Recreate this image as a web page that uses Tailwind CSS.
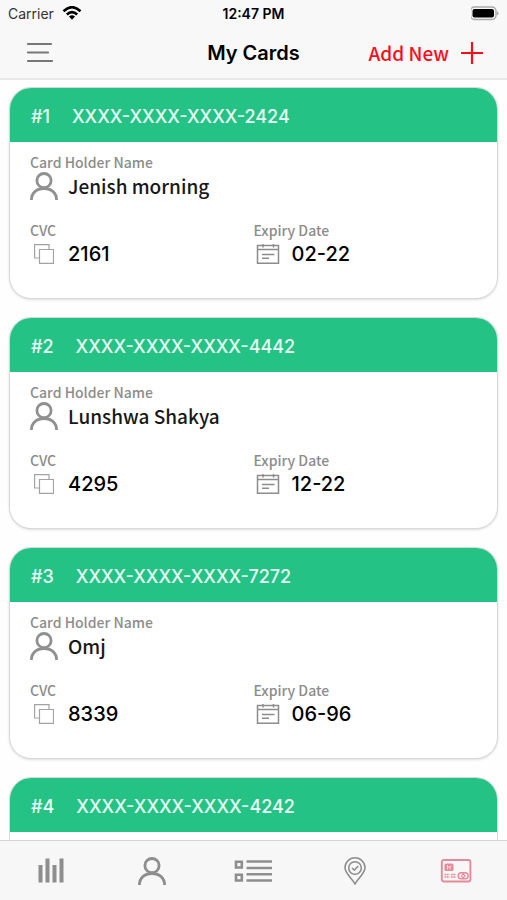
<!DOCTYPE html>
<html lang="en">
<head>
<meta charset="utf-8">
<meta name="viewport" content="width=device-width, initial-scale=1">
<title>My Cards</title>
<script src="https://cdn.jsdelivr.net/npm/@tailwindcss/browser@4"></script>
</head>
<body class="flex h-screen flex-col overflow-hidden bg-[#fefefe] font-['Inter',sans-serif] text-black">
<svg class="hidden" aria-hidden="true">
  <symbol id="person" viewBox="0 0 28 28"><g fill="none" stroke="currentColor" stroke-width="2.8"><circle cx="14" cy="8.6" r="7.1"/><path d="M1.400 28C1.400 21 6.500 16.500 14 16.500s12.600 4.500 12.600 11.500"/></g></symbol>
  <symbol id="copy" viewBox="0 0 20 20"><g fill="none" stroke="currentColor" stroke-width="1.200"><path d="M5.500 14H.6V.6H15v4.900"/><path d="M5.500 5.500h14v13.900h-14z"/></g></symbol>
  <symbol id="calendar" viewBox="0 0 24 20"><g fill="none" stroke="currentColor" stroke-width="1.500"><path d="M1.500 1.500h21v17.700h-21zM1.500 5.500h21M7 0v3.500M17.500 0v3.500"/><path d="M6 10.500h12.500M6 14.200h7"/></g></symbol>
</svg>

<header class="shrink-0 border-b-2 border-[#e9e9e9] bg-[#f8f8f8]">
  <div class="grid h-7 grid-cols-3 items-center px-2 text-sm leading-5">
    <div class="flex items-center gap-2 text-[#333]">
      <span>Carrier</span>
      <svg class="h-4 w-5 text-black" viewBox="0 0 20 16" fill="none" stroke="currentColor" stroke-width="2.600"><path d="M1.500 5.200Q10-2.800 18.500 5.200M4.800 8.500Q10 3.600 15.200 8.500"/><path d="M7 10.600Q10 8 13 10.600L10 13.800z" fill="currentColor" stroke="none"/></svg>
    </div>
    <div class="text-center font-semibold whitespace-nowrap">12:47 PM</div>
    <svg class="h-4 w-7 justify-self-end" viewBox="0 0 28 16"><rect x="-.5" y="1" width="25.500" height="12.500" rx="4" fill="#f8f8f8" stroke="#aaa" stroke-width="1.500"/><rect x="1.500" y="3" width="21.500" height="8.500" rx="2" fill="#000"/><path d="M26 5q3 2.300 0 4.600z" fill="#aaa"/></svg>
  </div>
  <div class="grid h-[50px] grid-cols-[1fr_auto_1fr] items-center px-6">
    <button type="button" aria-label="Menu" class="w-8 text-[#777]">
      <svg class="h-6 w-8" viewBox="0 0 32 24" stroke="currentColor" stroke-width="2.200" stroke-linecap="round"><path d="M4 3h23M4 11.500h20M4 20h24"/></svg>
    </button>
    <h1 class="text-xl font-semibold">My Cards</h1>
    <button type="button" class="flex items-center gap-3 justify-self-end whitespace-nowrap font-['Noto_Sans_CJK_SC',sans-serif] text-[19px] leading-6 font-medium text-[#fb0d1b]">Add New
      <svg class="size-[22px]" viewBox="0 0 22 22" stroke="currentColor" stroke-width="2.200"><path d="M11 0v22M0 11h22"/></svg>
    </button>
  </div>
</header>

<main class="flex min-h-0 flex-1 flex-col gap-[18px] overflow-y-auto px-[9px] pt-[7px] pb-4 [scrollbar-width:none]">
  <article class="shrink-0 overflow-hidden rounded-[22px] border border-[#d9d9d9] bg-white shadow-sm">
    <h2 class="flex h-[54px] items-center gap-[22px] bg-[#25c285] px-[21px] pt-1 text-lg font-medium text-[#e9fff5]"><span>#1</span><span>XXXX-XXXX-XXXX-2424</span></h2>
    <dl class="grid grid-cols-2 gap-y-5 px-5 pt-[10px] pb-[30px]">
      <div class="col-span-2">
        <dt class="font-['Noto_Sans_CJK_SC',sans-serif] text-sm leading-5 font-medium text-[#8c8c8c]">Card Holder Name</dt>
        <dd class="flex h-7 items-center gap-[10px] font-['Noto_Sans_CJK_SC',sans-serif] text-[19px] leading-7 font-medium text-[#181818]"><svg class="size-7 text-[#909090]"><use href="#person"/></svg>Jenish morning</dd>
      </div>
      <div>
        <dt class="font-['Noto_Sans_CJK_SC',sans-serif] text-sm leading-5 font-medium text-[#8c8c8c]">CVC</dt>
        <dd class="flex h-7 items-center gap-[10px] text-xl font-medium"><span class="flex w-7 justify-center"><svg class="size-5 text-[#a3a3a3]"><use href="#copy"/></svg></span>2161</dd>
      </div>
      <div>
        <dt class="font-['Noto_Sans_CJK_SC',sans-serif] text-sm leading-5 font-medium text-[#8c8c8c]">Expiry Date</dt>
        <dd class="flex h-7 items-center gap-[10px] text-xl font-medium"><span class="flex w-7 justify-center"><svg class="h-5 w-6 text-[#8c8c8c]"><use href="#calendar"/></svg></span>02-22</dd>
      </div>
    </dl>
  </article>

  <article class="shrink-0 overflow-hidden rounded-[22px] border border-[#d9d9d9] bg-white shadow-sm">
    <h2 class="flex h-[54px] items-center gap-[22px] bg-[#25c285] px-[21px] pt-1 text-lg font-medium text-[#e9fff5]"><span>#2</span><span>XXXX-XXXX-XXXX-4442</span></h2>
    <dl class="grid grid-cols-2 gap-y-5 px-5 pt-[10px] pb-[30px]">
      <div class="col-span-2">
        <dt class="font-['Noto_Sans_CJK_SC',sans-serif] text-sm leading-5 font-medium text-[#8c8c8c]">Card Holder Name</dt>
        <dd class="flex h-7 items-center gap-[10px] font-['Noto_Sans_CJK_SC',sans-serif] text-[19px] leading-7 font-medium text-[#181818]"><svg class="size-7 text-[#909090]"><use href="#person"/></svg>Lunshwa Shakya</dd>
      </div>
      <div>
        <dt class="font-['Noto_Sans_CJK_SC',sans-serif] text-sm leading-5 font-medium text-[#8c8c8c]">CVC</dt>
        <dd class="flex h-7 items-center gap-[10px] text-xl font-medium"><span class="flex w-7 justify-center"><svg class="size-5 text-[#a3a3a3]"><use href="#copy"/></svg></span>4295</dd>
      </div>
      <div>
        <dt class="font-['Noto_Sans_CJK_SC',sans-serif] text-sm leading-5 font-medium text-[#8c8c8c]">Expiry Date</dt>
        <dd class="flex h-7 items-center gap-[10px] text-xl font-medium"><span class="flex w-7 justify-center"><svg class="h-5 w-6 text-[#8c8c8c]"><use href="#calendar"/></svg></span>12-22</dd>
      </div>
    </dl>
  </article>

  <article class="shrink-0 overflow-hidden rounded-[22px] border border-[#d9d9d9] bg-white shadow-sm">
    <h2 class="flex h-[54px] items-center gap-[22px] bg-[#25c285] px-[21px] pt-1 text-lg font-medium text-[#e9fff5]"><span>#3</span><span>XXXX-XXXX-XXXX-7272</span></h2>
    <dl class="grid grid-cols-2 gap-y-5 px-5 pt-[10px] pb-[30px]">
      <div class="col-span-2">
        <dt class="font-['Noto_Sans_CJK_SC',sans-serif] text-sm leading-5 font-medium text-[#8c8c8c]">Card Holder Name</dt>
        <dd class="flex h-7 items-center gap-[10px] font-['Noto_Sans_CJK_SC',sans-serif] text-[19px] leading-7 font-medium text-[#181818]"><svg class="size-7 text-[#909090]"><use href="#person"/></svg>Omj</dd>
      </div>
      <div>
        <dt class="font-['Noto_Sans_CJK_SC',sans-serif] text-sm leading-5 font-medium text-[#8c8c8c]">CVC</dt>
        <dd class="flex h-7 items-center gap-[10px] text-xl font-medium"><span class="flex w-7 justify-center"><svg class="size-5 text-[#a3a3a3]"><use href="#copy"/></svg></span>8339</dd>
      </div>
      <div>
        <dt class="font-['Noto_Sans_CJK_SC',sans-serif] text-sm leading-5 font-medium text-[#8c8c8c]">Expiry Date</dt>
        <dd class="flex h-7 items-center gap-[10px] text-xl font-medium"><span class="flex w-7 justify-center"><svg class="h-5 w-6 text-[#8c8c8c]"><use href="#calendar"/></svg></span>06-96</dd>
      </div>
    </dl>
  </article>

  <article class="shrink-0 rounded-t-[22px] border border-[#d9d9d9] bg-white">
    <h2 class="flex h-[54px] items-center gap-[22px] rounded-t-[21px] bg-[#25c285] px-[21px] pt-1 text-lg font-medium text-[#e9fff5]"><span>#4</span><span>XXXX-XXXX-XXXX-4242</span></h2>
    <div class="h-3"></div>
  </article>
</main>

<nav class="grid h-[60px] shrink-0 grid-cols-5 items-center justify-items-center border-t border-[#d4d4d4] bg-[#f7f7f7] text-[#8e8e8e]">
  <a href="#stats" aria-label="Statistics"><svg class="h-7 w-7" viewBox="0 0 28 28" fill="currentColor"><path d="M1.500 8h4v17.500h-4zM8.500 1.500h4v24h-4zM15.500 8h4v17.500h-4zM22.500 1.500h4v24h-4z"/></svg></a>
  <a href="#profile" aria-label="Profile"><svg class="size-7"><use href="#person"/></svg></a>
  <a href="#list" aria-label="List"><svg class="h-6 w-[38px]" viewBox="0 0 38 24"><g fill="none" stroke="currentColor" stroke-width="2.600"><path d="M2 2.700h5.800v5.800H2zM2 15.700h5.800v5.800H2z"/><path d="M12.500 2.500H38M12.500 9H38M12.500 15.200H38M12.500 21.500H38"/></g></svg></a>
  <a href="#places" aria-label="Places"><svg class="h-7 w-6" viewBox="0 0 24 28" fill="none" stroke="currentColor" stroke-width="1.600"><path d="M12 27C9 21 2 16.500 2 10.800a10 10 0 0 1 20 0C22 16.500 15 21 12 27z"/><circle cx="12" cy="11" r="6.300"/><path d="M9 11l2.300 2.200L15.200 9"/></svg></a>
  <a href="#cards" aria-label="My Cards" class="text-[#e58a98]"><svg class="h-6 w-8" viewBox="0 0 32 24" fill="none" stroke="currentColor"><rect x="1.800" y="1" width="28.600" height="21.500" rx="2" stroke-width="1.900"/><rect x="4.500" y="4.500" width="9" height="7.500" rx="1.500" fill="currentColor" stroke="none"/><path d="M7.500 6v4.500M7.500 8h2.500l1.500-1.500M10 8v2.500" stroke="#fff" stroke-width=".7"/><path d="M4.500 15.500h5M11 15.500h5M4.500 18h5M11 18h5" stroke-width="1.300" stroke-dasharray="1.800 .5"/><rect x="18.300" y="13.800" width="9.800" height="6" rx="3" stroke-width="1.500"/><path d="M23.200 14.500l-1.800 2.300 1.800 2.300 1.800-2.300z" stroke-width="1.100"/></svg></a>
</nav>
</body>
</html>
